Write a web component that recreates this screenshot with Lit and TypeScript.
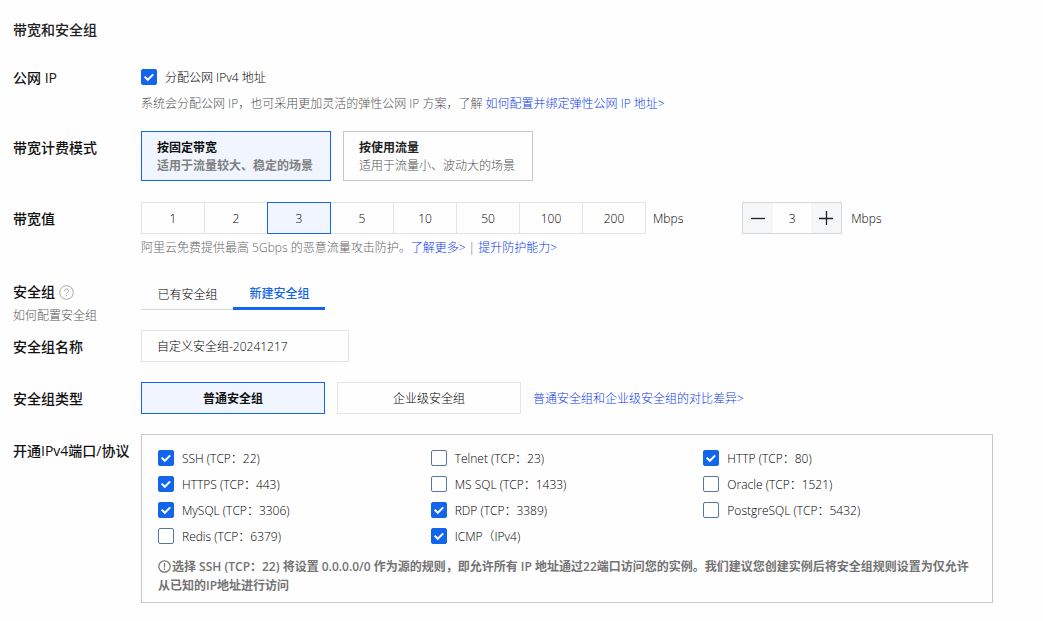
import { LitElement, html, css } from "lit";
import { customElement, state } from "lit/decorators.js";

interface Port {
  name: string;
  on: boolean;
}

@customElement("app-root")
export class AppRoot extends LitElement {
  @state() private publicIp = true;
  @state() private mode = 0;
  @state() private bandwidth = 3;
  @state() private tab = 1;
  @state() private groupType = 0;
  @state() private ports: Port[] = [
    { name: "SSH (TCP：22)", on: true },
    { name: "Telnet (TCP：23)", on: false },
    { name: "HTTP (TCP：80)", on: true },
    { name: "HTTPS (TCP：443)", on: true },
    { name: "MS SQL (TCP：1433)", on: false },
    { name: "Oracle (TCP：1521)", on: false },
    { name: "MySQL (TCP：3306)", on: true },
    { name: "RDP (TCP：3389)", on: true },
    { name: "PostgreSQL (TCP：5432)", on: false },
    { name: "Redis (TCP：6379)", on: false },
    { name: "ICMP（IPv4)", on: true },
  ];

  private modes = [
    { title: "按固定带宽", text: "适用于流量较大、稳定的场景" },
    { title: "按使用流量", text: "适用于流量小、波动大的场景" },
  ];
  private speeds = [1, 2, 3, 5, 10, 50, 100, 200];

  static styles = css`
    :host {
      display: block;
      min-height: 100vh;
      box-sizing: border-box;
      padding: 20px 50px 18px 13px;
      background: #fefefe;
      color: #000;
      font: 300 12px/18px "Open Sans", "Noto Sans CJK SC", sans-serif;
    }
    *, *::before, *::after { box-sizing: border-box; }
    button, input { font: inherit; color: inherit; margin: 0; }
    button { cursor: pointer; padding: 0; background: none; border: 0; }
    a { color: #0d3cec; text-decoration: none; }
    h2 { margin: 0 0 20px; font-size: 14px; line-height: 20px; font-weight: 500; color: #222; }
    .row { display: grid; grid-template-columns: 128px minmax(0, 1fr); margin-top: 20px; }
    .row.close { margin-top: 18px; }
    .row.wide { margin-top: 21px; }
    .row.tight { margin-top: 4px; }
    .label {
      font-size: 14px;
      line-height: 20px;
      font-weight: 500;
      color: #111;
      padding-top: 7px;
      white-space: nowrap;
    }
    .label.low { padding-top: 8px; }
    .label.top { padding-top: 4px; }
    .title { display: flex; align-items: center; gap: 4px; }
    .sub { display: block; margin-top: 4px; font-size: 12px; font-weight: 300; color: #555; }
    .check { display: flex; align-items: center; gap: 8px; }
    .check span { padding-top: 2px; }
    .check.solo { height: 34px; }
    .check input {
      appearance: none;
      width: 16px;
      height: 16px;
      border: 1px solid #5577a0;
      border-radius: 2px;
      background: #fff;
    }
    .check input:checked {
      border-color: #1366ec;
      background: #1366ec url("data:image/svg+xml,%3Csvg xmlns='http://www.w3.org/2000/svg' viewBox='0 0 14 14'%3E%3Cpath d='M2.6 6.6l3.2 3.2 5.4-5.4' fill='none' stroke='white' stroke-width='2'/%3E%3C/svg%3E") center / 14px 14px no-repeat;
    }
    .help { margin: 1px 0 0; color: #555; }
    .help.pale { margin-top: 5px; color: #666; }
    .cards { display: flex; gap: 12px; }
    .card {
      width: 190px;
      height: 50px;
      padding: 2px 15px 0;
      border: 1px solid #c8c8c8;
      text-align: left;
      white-space: nowrap;
      color: #555;
    }
    .card b { display: block; font-weight: 600; color: #222; }
    .on { border-color: #1366ec; background: #f0f5ff; }
    .card.on { font-weight: 600; color: #808080; }
    .card.on b { color: #111; }
    .line { display: flex; align-items: center; }
    .segs { display: flex; margin-right: 7px; }
    .seg { width: 64px; height: 32px; padding-top: 2px; border: 1px solid #e5e5e5; }
    .seg + .seg { margin-left: -1px; }
    .seg.on { position: relative; border-color: #1366ec; }
    .unit { padding-top: 2px; }
    .stepper {
      display: flex;
      width: 100px;
      height: 32px;
      margin: 0 9px 0 59px;
      border: 1px solid #d6d6d6;
    }
    .step { width: 30px; display: grid; place-items: center; background: #f5f6f8; }
    .stepper input { flex: 1; min-width: 0; padding: 2px 0 0; border: 0; background: none; text-align: center; }
    .tabs { display: flex; }
    .tab { height: 32px; padding: 2px 15px 0 16px; border-bottom: 1px solid #d6d6d6; width: 92px; }
    .tab.active { border-bottom: 3px solid #1366ec; color: #1366ec; font-weight: 500; padding-top: 3px; }
    .name { width: 208px; height: 32px; padding: 0 15px; border: 1px solid #e5e5e5; background: none; }
    .type { width: 184px; height: 32px; padding-top: 2px; border: 1px solid #e5e5e5; }
    .type.on { border-color: #1366ec; font-weight: 600; color: #111; }
    .compare { padding-top: 2px; }
    .panel { padding: 10px 16px 7px; border: 1px solid #c8c8c8; }
    .ports { display: grid; grid-template-columns: repeat(3, minmax(0, 1fr)); grid-auto-rows: 26px; }
    .note { margin: 8px 0 0; line-height: 19px; font-weight: 600; color: #737373; }
    svg { display: block; }
    .note svg { display: inline-block; vertical-align: -2px; margin-right: 1px; }
  `;

  private toggle(i: number) {
    this.ports = this.ports.map((p, n) => (n === i ? { ...p, on: !p.on } : p));
  }

  render() {
    return html`
      <h2>带宽和安全组</h2>

      <div class="row">
        <div class="label low">公网 IP</div>
        <div>
          <label class="check solo">
            <input type="checkbox" .checked=${this.publicIp}
              @change=${() => (this.publicIp = !this.publicIp)} /><span>分配公网 IPv4 地址</span>
          </label>
          <p class="help">系统会分配公网 IP，也可采用更加灵活的弹性公网 IP 方案，了解 <a href="#">如何配置并绑定弹性公网 IP 地址&gt;</a></p>
        </div>
      </div>

      <div class="row close">
        <div class="label">带宽计费模式</div>
        <div class="cards">
          ${this.modes.map((m, i) => html`
            <button class="card ${this.mode === i ? "on" : ""}" @click=${() => (this.mode = i)}>
              <b>${m.title}</b>${m.text}
            </button>`)}
        </div>
      </div>

      <div class="row wide">
        <label class="label" for="speed">带宽值</label>
        <div>
          <div class="line">
            <div class="segs">
              ${this.speeds.map((s) => html`
                <button class="seg ${this.bandwidth === s ? "on" : ""}"
                  @click=${() => (this.bandwidth = s)}>${s}</button>`)}
            </div>
            <span class="unit">Mbps</span>
            <div class="stepper">
              <button class="step" aria-label="减少" @click=${() => (this.bandwidth = Math.max(1, this.bandwidth - 1))}>
                <svg width="14" height="14" viewBox="0 0 14 14"><path d="M0 7.5h14" stroke="#222" stroke-width="1.3" fill="none" /></svg>
              </button>
              <input id="speed" type="text" inputmode="numeric" .value=${String(this.bandwidth)} />
              <button class="step" aria-label="增加" @click=${() => this.bandwidth++}>
                <svg width="14" height="14" viewBox="0 0 14 14"><path d="M0 7.5h14M7.5 0v14" stroke="#222" stroke-width="1.3" fill="none" /></svg>
              </button>
            </div>
            <span class="unit">Mbps</span>
          </div>
          <p class="help pale">阿里云免费提供最高 5Gbps 的恶意流量攻击防护。<a href="#">了解更多&gt;</a> | <a href="#">提升防护能力&gt;</a></p>
        </div>
      </div>

      <div class="row wide">
        <div class="label top">
          <span class="title">安全组
            <svg width="15" height="15" viewBox="0 0 15 15" fill="none" stroke="#a6a6a6">
              <circle cx="7.5" cy="7.5" r="6.8" />
              <path d="M5.4 6.1c0-1.3.9-2.1 2.1-2.1s2.1.8 2.1 1.9c0 1.5-2.1 1.6-2.1 3.2M7.5 10.1v1.2" />
            </svg>
          </span>
          <span class="sub">如何配置安全组</span>
        </div>
        <div class="tabs">
          ${["已有安全组", "新建安全组"].map((t, i) => html`
            <button class="tab ${this.tab === i ? "active" : ""}" @click=${() => (this.tab = i)}>${t}</button>`)}
        </div>
      </div>

      <div class="row tight">
        <label class="label" for="name">安全组名称</label>
        <div><input id="name" class="name" type="text" value="自定义安全组-20241217" /></div>
      </div>

      <div class="row">
        <div class="label">安全组类型</div>
        <div class="line cards">
          ${["普通安全组", "企业级安全组"].map((t, i) => html`
            <button class="type ${this.groupType === i ? "on" : ""}" @click=${() => (this.groupType = i)}>${t}</button>`)}
          <a class="compare" href="#">普通安全组和企业级安全组的对比差异&gt;</a>
        </div>
      </div>

      <div class="row">
        <div class="label">开通IPv4端口/协议</div>
        <div class="panel">
          <div class="ports">
            ${this.ports.map((p, i) => html`
              <label class="check">
                <input type="checkbox" .checked=${p.on} @change=${() => this.toggle(i)} /><span>${p.name}</span>
              </label>`)}
          </div>
          <p class="note"><svg width="13" height="13" viewBox="0 0 13 13" fill="none" stroke="#737373" stroke-width="1.2"><circle cx="6.5" cy="6.5" r="5.7" /><path d="M6.5 3v4.4M6.5 8.6v1.4" /></svg>选择 SSH (TCP：22) 将设置 0.0.0.0/0 作为源的规则，即允许所有 IP 地址通过22端口访问您的实例。我们建议您创建实例后将安全组规则设置为仅允许从已知的IP地址进行访问</p>
        </div>
      </div>
    `;
  }
}
